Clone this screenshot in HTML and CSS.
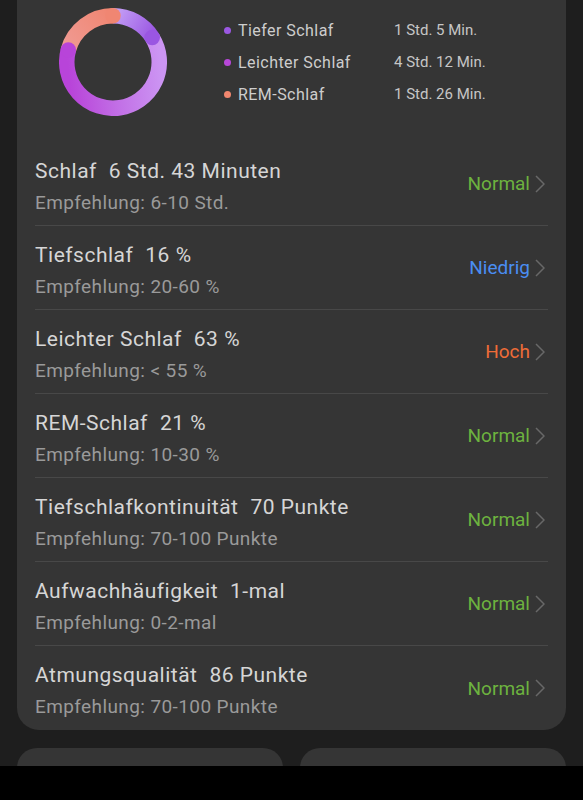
FILE: index.html
```html
<!DOCTYPE html>
<html lang="de">
<head>
<meta charset="utf-8">
<title>Schlaf</title>
<link rel="stylesheet" href="styles.css">
</head>
<body>
<div class="page">
  <section class="card">
    <div class="summary">
      <svg class="donut" width="108" height="108" viewBox="0 0 108 108">
        <defs>
          <linearGradient id="gDeep" gradientUnits="userSpaceOnUse" x1="54" y1="7.75" x2="93.2" y2="29.5">
            <stop offset="0" stop-color="#c4a0f6"/>
            <stop offset="1" stop-color="#9a56e2"/>
          </linearGradient>
          <linearGradient id="gLight" gradientUnits="userSpaceOnUse" x1="100" y1="40" x2="8" y2="50">
            <stop offset="0" stop-color="#cc95f3"/>
            <stop offset="0.5" stop-color="#c270e6"/>
            <stop offset="1" stop-color="#b844d9"/>
          </linearGradient>
          <linearGradient id="gRem" gradientUnits="userSpaceOnUse" x1="9.3" y1="42" x2="54" y2="7.75">
            <stop offset="0" stop-color="#f09a92"/>
            <stop offset="1" stop-color="#f08672"/>
          </linearGradient>
        </defs>
        <path d="M54 7.75 A46.25 46.25 0 0 1 93.22 29.49" fill="none" stroke="url(#gDeep)" stroke-width="15.5"/>
        <path d="M93.22 29.49 A46.25 46.25 0 1 1 9.33 42.03" fill="none" stroke="url(#gLight)" stroke-width="15.5"/>
        <path d="M9.33 42.03 A46.25 46.25 0 0 1 54 7.75" fill="none" stroke="url(#gRem)" stroke-width="15.5"/>
        <circle cx="93.22" cy="29.49" r="7.75" fill="#9a56e2"/>
        <circle cx="9.33" cy="42.03" r="7.75" fill="#b844d9"/>
        <circle cx="54" cy="7.75" r="7.75" fill="#f08672"/>
      </svg>
      <ul class="legend">
        <li><span class="dot dot-deep"></span><span class="label">Tiefer Schlaf</span><span class="value">1 Std. 5 Min.</span></li>
        <li><span class="dot dot-light"></span><span class="label">Leichter Schlaf</span><span class="value">4 Std. 12 Min.</span></li>
        <li><span class="dot dot-rem"></span><span class="label">REM-Schlaf</span><span class="value">1 Std. 26 Min.</span></li>
      </ul>
    </div>

    <div class="row">
      <div class="info"><div class="title">Schlaf<span class="num">6 Std. 43 Minuten</span></div><div class="sub">Empfehlung: 6-10 Std.</div></div>
      <div class="status normal">Normal<svg class="chev" width="10" height="18" viewBox="0 0 10 18"><path d="M1 1 L9 9 L1 17" fill="none" stroke="#686868" stroke-width="1.5"/></svg></div>
    </div>
    <div class="row">
      <div class="info"><div class="title">Tiefschlaf<span class="num">16 %</span></div><div class="sub">Empfehlung: 20-60 %</div></div>
      <div class="status low">Niedrig<svg class="chev" width="10" height="18" viewBox="0 0 10 18"><path d="M1 1 L9 9 L1 17" fill="none" stroke="#686868" stroke-width="1.5"/></svg></div>
    </div>
    <div class="row">
      <div class="info"><div class="title">Leichter Schlaf<span class="num">63 %</span></div><div class="sub">Empfehlung: &lt; 55 %</div></div>
      <div class="status high">Hoch<svg class="chev" width="10" height="18" viewBox="0 0 10 18"><path d="M1 1 L9 9 L1 17" fill="none" stroke="#686868" stroke-width="1.5"/></svg></div>
    </div>
    <div class="row">
      <div class="info"><div class="title">REM-Schlaf<span class="num">21 %</span></div><div class="sub">Empfehlung: 10-30 %</div></div>
      <div class="status normal">Normal<svg class="chev" width="10" height="18" viewBox="0 0 10 18"><path d="M1 1 L9 9 L1 17" fill="none" stroke="#686868" stroke-width="1.5"/></svg></div>
    </div>
    <div class="row">
      <div class="info"><div class="title">Tiefschlafkontinuität<span class="num">70 Punkte</span></div><div class="sub">Empfehlung: 70-100 Punkte</div></div>
      <div class="status normal">Normal<svg class="chev" width="10" height="18" viewBox="0 0 10 18"><path d="M1 1 L9 9 L1 17" fill="none" stroke="#686868" stroke-width="1.5"/></svg></div>
    </div>
    <div class="row">
      <div class="info"><div class="title">Aufwachhäufigkeit<span class="num">1-mal</span></div><div class="sub">Empfehlung: 0-2-mal</div></div>
      <div class="status normal">Normal<svg class="chev" width="10" height="18" viewBox="0 0 10 18"><path d="M1 1 L9 9 L1 17" fill="none" stroke="#686868" stroke-width="1.5"/></svg></div>
    </div>
    <div class="row">
      <div class="info"><div class="title">Atmungsqualität<span class="num">86 Punkte</span></div><div class="sub">Empfehlung: 70-100 Punkte</div></div>
      <div class="status normal">Normal<svg class="chev" width="10" height="18" viewBox="0 0 10 18"><path d="M1 1 L9 9 L1 17" fill="none" stroke="#686868" stroke-width="1.5"/></svg></div>
    </div>
  </section>

  <div class="tiles">
    <div class="tile"></div>
    <div class="tile"></div>
  </div>
</div>
<div class="navbar"></div>
</body>
</html>
```
FILE: styles.css
```css
* { box-sizing: border-box; }
html, body { margin: 0; padding: 0; }
body {
  background: #1e1e1e;
  font-family: Roboto, "Noto Sans", "Liberation Sans", sans-serif;
  color: #d8d8d8;
}
.page { padding: 0 17px 60px; }
.card {
  background: #353535;
  border-radius: 22px;
  margin-top: -30px;
  padding: 0 18px;
}
.summary {
  display: flex;
  align-items: flex-start;
  padding-top: 37.5px;
  height: 172px;
}
.donut { margin-left: 24px; flex: none; display: block; }
.legend {
  list-style: none;
  margin: 6.5px 0 0 57px;
  padding: 0;
}
.legend li {
  display: flex;
  align-items: center;
  height: 32px;
}
.dot { width: 7px; height: 7px; border-radius: 50%; margin-right: 7px; flex: none; }
.dot-deep { background: #9b58e2; }
.dot-light { background: #b747d8; }
.dot-rem { background: #f0866e; }
.label { width: 156px; font-size: 16px; letter-spacing: 0.45px; color: #cdcdcd; }
.value { font-size: 15px; color: #c6c6c6; }

.row {
  display: flex;
  height: 84px;
  border-bottom: 1px solid #484848;
}
.row:last-child { border-bottom: none; }
.info { flex: 1; padding-top: 17px; }
.title { font-size: 21px; line-height: 24px; letter-spacing: 0.5px; color: #d6d6d6; }
.num { margin-left: 12px; }
.sub { font-size: 19px; line-height: 26px; letter-spacing: 0.4px; margin-top: 7px; color: #9a9a9a; }
.status {
  align-self: center;
  display: flex;
  align-items: center;
  font-size: 19px;
}
.chev { margin-left: 5px; margin-right: 3px; }
.normal { color: #6db33f; }
.low { color: #4a8ef2; }
.high { color: #ef6c38; }

.tiles {
  display: grid;
  grid-template-columns: 1fr 1fr;
  column-gap: 17px;
  margin-top: 18px;
}
.tile { background: #353535; border-radius: 20px; height: 120px; }
.navbar {
  position: fixed;
  left: 0;
  right: 0;
  bottom: 0;
  height: 34px;
  background: #000;
}
```
